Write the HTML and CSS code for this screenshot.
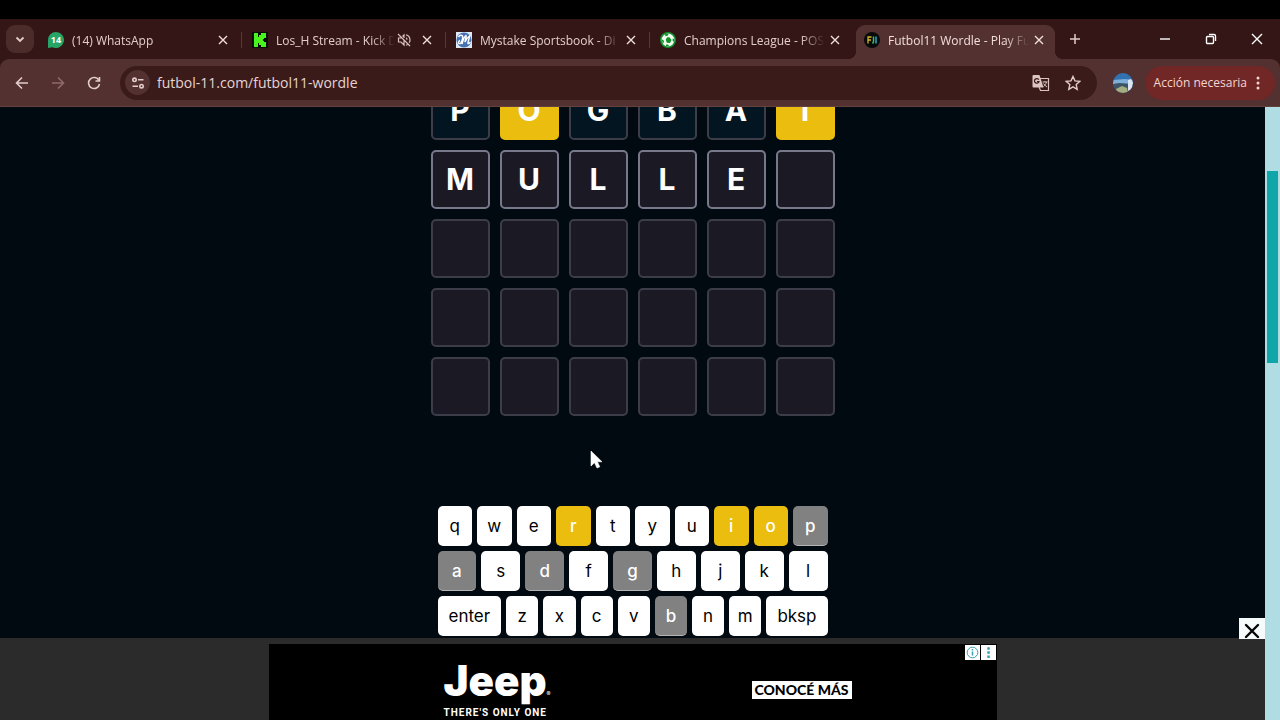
FILE: index.html
```html
<!DOCTYPE html>
<html lang="es">
<head>
    <meta charset="UTF-8">
    <meta name="viewport" content="width=device-width, initial-scale=1.0">
    <title>Futbol11 Wordle</title>
    <link rel="stylesheet" href="styles.css">
</head>
<body>

<div class="tab-strip">
    <button class="tab-search" aria-label="Buscar pestañas">
        <svg width="12" height="12" viewBox="0 0 12 12"><path d="M2.500 4.500 6 8l3.500-3.500" fill="none" stroke="currentColor" stroke-width="1.800"/></svg>
    </button>
    <div class="tabs">
        <div class="tab">
            <svg class="favicon" viewBox="0 0 16 16"><path d="M8 0a8 8 0 1 1-3.500 15.200L0 16V8a8 8 0 0 1 8-8z" fill="#27a567"/><text x="8" y="11" text-anchor="middle" class="badge-text">14</text></svg>
            <span class="tab-title">(14) WhatsApp</span>
            <button class="tab-close" aria-label="Cerrar"><svg width="10" height="10" viewBox="0 0 10 10"><path d="M1 1l8 8M9 1 1 9"/></svg></button>
        </div>
        <div class="tab">
            <svg class="favicon" viewBox="0 0 16 16"><path d="M0 0h16v16H0z" fill="#061006"/><path d="M2 1h4v4h1V3h2V1h5v5h-2v1h-1v2h1v1h2v5H9v-2H7v-2H6v4H2z" fill="#48f51c"/></svg>
            <span class="tab-title">Los_H Stream - Kick D</span>
            <svg class="muted" width="14" height="14" viewBox="0 0 14 14"><path d="M1 1l12 12M5 5H1.500v4H4l3 3V7M5.500 3.500 7 2v3M9 4.800c.8.500 1 1.200 1 2M9 1.800c2.500.6 4 3 4 5.200 0 1-.3 2-.8 2.800M9 12.200l1.500-.7"/></svg>
            <button class="tab-close" aria-label="Cerrar"><svg width="10" height="10" viewBox="0 0 10 10"><path d="M1 1l8 8M9 1 1 9"/></svg></button>
        </div>
        <div class="tab">
            <svg class="favicon" viewBox="0 0 16 16"><path d="M0 0h16v16H0z" fill="#dfe9f5"/><circle cx="8" cy="8" r="7.500" fill="#4472b4"/><path d="M2.500 5c2-3 5-2 4 2s-2 5-3.500 4.500S3 9 4 8.500M6 12c1-4 2-7 4-8.500 1 1-1 4-1 6.500 1.500-3 3-5 4.500-6 .5 2-2 5-1.500 7.500 1 .3 1.500-.5 2.500-1.500" fill="none" stroke="#fff" stroke-width="1.400"/></svg>
            <span class="tab-title">Mystake Sportsbook - Di</span>
            <button class="tab-close" aria-label="Cerrar"><svg width="10" height="10" viewBox="0 0 10 10"><path d="M1 1l8 8M9 1 1 9"/></svg></button>
        </div>
        <div class="tab before-active">
            <svg class="favicon" viewBox="0 0 16 16"><circle cx="8" cy="8" r="8" fill="#12912a"/><circle cx="8" cy="8" r="6.400" fill="#f2fbf2"/><path d="M9.500 5.200l2 2.800-1.500 3-3.200-.3L5.700 7.500l1.500-2.300zM5 2.200l3.500-.6-.5 1.900-2.500.8zM14.300 7l-.3 3-1.500-1.500.3-2zM1.700 7.500l1.800.5.5 2.500-1.300.8zM6 12.500l2.500.3.500 1.500-3-.3z" fill="#12912a"/></svg>
            <span class="tab-title">Champions League - POS</span>
            <button class="tab-close" aria-label="Cerrar"><svg width="10" height="10" viewBox="0 0 10 10"><path d="M1 1l8 8M9 1 1 9"/></svg></button>
        </div>
        <div class="tab active">
            <svg class="favicon" viewBox="0 0 16 16"><circle cx="8" cy="8" r="8" fill="#080a0a"/><path d="M4 11.500V5h3.500M4 8h3" fill="none" stroke="#d8b62a" stroke-width="1.300"/><path d="M9.500 4.500v5.500l-1 1.500" fill="none" stroke="#35b96a" stroke-width="1.500"/><path d="M12 4.500v7" stroke="#2aa6c4" stroke-width="1.500"/></svg>
            <span class="tab-title">Futbol11 Wordle - Play Fu</span>
            <button class="tab-close" aria-label="Cerrar"><svg width="10" height="10" viewBox="0 0 10 10"><path d="M1 1l8 8M9 1 1 9"/></svg></button>
        </div>
    </div>
    <button class="new-tab" aria-label="Nueva pestaña">
        <svg width="12" height="12" viewBox="0 0 12 12"><path d="M6 1v10M1 6h10" stroke="currentColor" stroke-width="1.500"/></svg>
    </button>
    <div class="window-controls">
        <button aria-label="Minimizar"><svg width="12" height="12" viewBox="0 0 12 12"><path d="M1 6h10"/></svg></button>
        <button aria-label="Restaurar"><svg width="12" height="12" viewBox="0 0 12 12"><rect x="1.500" y="3.500" width="7" height="7" rx="1"/><path d="M4 1.500h5a1.500 1.500 0 0 1 1.500 1.500v5"/></svg></button>
        <button aria-label="Cerrar ventana"><svg width="12" height="12" viewBox="0 0 12 12"><path d="M1 1l10 10M11 1 1 11"/></svg></button>
    </div>
</div>

<div class="toolbar">
    <button class="nav-btn" aria-label="Atrás"><svg width="14" height="14" viewBox="0 0 14 14"><path d="M13 7H2M7 1.500 1.500 7 7 12.500"/></svg></button>
    <button class="nav-btn" aria-label="Adelante" disabled><svg width="14" height="14" viewBox="0 0 14 14"><path d="M1 7h11M7 1.500 12.500 7 7 12.500"/></svg></button>
    <button class="nav-btn" aria-label="Recargar"><svg width="14" height="14" viewBox="0 0 14 14"><path d="M12 4.500A5.500 5.500 0 1 0 12.500 8M12.500 1v4H8.500"/></svg></button>
    <div class="omnibox">
        <button class="site-info" aria-label="Información del sitio">
            <svg width="14" height="14" viewBox="0 0 14 14"><circle cx="3.500" cy="3.800" r="1.700"/><path d="M7 3.800h5.500M1.500 10.200H7"/><circle cx="10.500" cy="10.200" r="1.700"/></svg>
        </button>
        <input class="url" type="text" aria-label="Dirección" value="futbol-11.com/futbol11-wordle">
        <button class="omni-btn" aria-label="Traducir">
            <svg width="18" height="18" viewBox="0 0 18 18"><path d="M8 4.500h8.500v12h-8L7 13" fill="none" stroke="#dcc4c3" stroke-width="1.200"/><path d="M1.500 1h6l4 12.500H1.500A1 1 0 0 1 .5 12.500V2a1 1 0 0 1 1-1z" fill="#dcc4c3"/><path d="M6.800 5.800A2.300 2.300 0 1 0 7 7.500H5" fill="none" stroke="#3a1b1a" stroke-width="1.200"/><path d="M10.500 8h5M13 7v1M14.500 8c-.5 2-1.500 3-3 4.500M11.500 9.500c1 1.500 2 2.500 3.500 3.500" fill="none" stroke="#dcc4c3"/></svg>
        </button>
        <button class="omni-btn" aria-label="Marcador">
            <svg width="16" height="16" viewBox="0 0 16 16"><path d="M8 1.500l2 4.400 4.700.5-3.500 3.200 1 4.700L8 11.900l-4.200 2.400 1-4.700L1.300 6.400 6 5.900z" fill="none" stroke="#e3cdcc" stroke-width="1.400"/></svg>
        </button>
    </div>
    <button class="avatar" aria-label="Perfil">
        <svg width="20" height="20" viewBox="0 0 20 20"><clipPath id="round"><circle cx="10" cy="10" r="10"/></clipPath><g clip-path="url(#round)"><path d="M0 0h20v20H0z" fill="#3272b0"/><path d="M0 7l12-1 8 1v4H0z" fill="#7fb0da"/><path d="M0 11l6-1 14 1v9H0z" fill="#3d5566"/><path d="M3 16l6-3 5 2 1 5H4z" fill="#a6ad80"/><path d="M15 7l3-1 2 4-1 6-4 2z" fill="#dce6f5"/></g></svg>
    </button>
    <button class="action-pill">Acción necesaria
        <svg width="4" height="14" viewBox="0 0 4 14"><circle cx="2" cy="2" r="1.500"/><circle cx="2" cy="7" r="1.500"/><circle cx="2" cy="12" r="1.500"/></svg>
    </button>
</div>

<div class="viewport">
    <main class="game">
        <div class="board" id="board"></div>
        <div class="keyboard" id="keyboard"></div>
    </main>
    <div class="scrollbar"><div class="thumb"></div></div>

    <div class="ad-bar">
        <button class="ad-close" aria-label="Cerrar anuncio"><svg width="16" height="16" viewBox="0 0 16 16"><path d="M2 2l12 12M14 2 2 14" stroke="#050505" stroke-width="2.400" stroke-linecap="round"/></svg></button>
        <div class="ad">
            <div class="brand">
                <div class="brand-name">Jeep<span class="reg">®</span></div>
                <div class="slogan">THERE'S ONLY ONE</div>
            </div>
            <a class="cta" href="#">CONOCÉ MÁS</a>
            <div class="ad-choices">
                <button aria-label="Información del anuncio"><svg width="13" height="13" viewBox="0 0 13 13"><circle cx="6.500" cy="6.500" r="5.300" fill="none" stroke="#36a3ab"/><path d="M6.500 5.500v4M6.500 3v1.500" stroke="#36a3ab" stroke-width="1.500"/></svg></button>
                <button aria-label="Opciones del anuncio"><svg width="13" height="13" viewBox="0 0 13 13" fill="#36a3ab"><path d="M5.300 1.200h2.500v2.500H5.300zM5.300 5.300h2.500v2.500H5.300zM5.300 9.400h2.500v2.500H5.300z"/></svg></button>
            </div>
        </div>
    </div>

    <svg class="cursor" width="14" height="20" viewBox="0 0 14 20"><path d="M1 1v15l3.500-3.300L7 18l2.800-1.200-2.400-5H12z" fill="#fff" stroke="#fff" stroke-width=".6"/></svg>
</div>

<script>
    const guesses = ['POGBAT', 'MULLE', '', '', ''];
    const currentRow = 1;
    const present = ['r', 'i', 'o'];
    const absent = ['p', 'a', 'd', 'g', 'b'];
    const layout = [
        ['q', 'w', 'e', 'r', 't', 'y', 'u', 'i', 'o', 'p'],
        ['a', 's', 'd', 'f', 'g', 'h', 'j', 'k', 'l'],
        ['enter', 'z', 'x', 'c', 'v', 'b', 'n', 'm', 'bksp']
    ];

    const board = document.getElementById('board');
    guesses.forEach((guess, row) => {
        for (let i = 0; i < 6; i++) {
            const cell = document.createElement('div');
            cell.className = 'cell';
            cell.innerText = guess[i] || '';
            if (row < currentRow) {
                // second and last letters are in the wrong position
                cell.classList.add(i === 1 || i === 5 ? 'present' : 'absent');
            } else if (row === currentRow) {
                cell.classList.add('current');
            }
            board.appendChild(cell);
        }
    });

    const keyboard = document.getElementById('keyboard');
    layout.forEach(keys => {
        const row = document.createElement('div');
        row.className = 'key-row';
        keys.forEach(key => {
            const button = document.createElement('button');
            button.className = 'key';
            button.innerText = key;
            if (key.length > 1) button.classList.add('wide');
            if (present.includes(key)) button.classList.add('present');
            if (absent.includes(key)) button.classList.add('absent');
            row.appendChild(button);
        });
        keyboard.appendChild(row);
    });
</script>

</body>
</html>
```

FILE: styles.css
```css
* {
    box-sizing: border-box;
}

body {
    margin: 0;
    padding-top: 19px;
    height: 100vh;
    display: flex;
    flex-direction: column;
    overflow: hidden;
    background-color: black;
    font-family: "Open Sans", "Noto Sans", sans-serif;
    color: #e3cdcc;
}

button {
    display: flex;
    justify-content: center;
    align-items: center;
    flex-shrink: 0;
    padding: 0;
    border: none;
    background: none;
    color: inherit;
    font-family: inherit;
    cursor: pointer;
}

/* Tabs */
.tab-strip {
    display: flex;
    align-items: center;
    height: 48px;
    margin-bottom: -8px;
    padding: 0 0 8px 6px;
    flex-shrink: 0;
    background-color: #331615;
}

.tab-search {
    width: 28px;
    height: 28px;
    margin-right: 6px;
    border-radius: 9px;
    background-color: #4c2c2b;
}

.tabs {
    display: flex;
    align-self: stretch;
    padding-top: 6px;
    flex: 0 1 1020px;
    min-width: 0;
}

.tab {
    position: relative;
    display: flex;
    align-items: center;
    flex: 1 1 0;
    min-width: 0;
    margin-right: 5px;
    padding: 0 8px 4px;
    font-size: 12px;
}

.tab::after {
    content: "";
    position: absolute;
    right: -3px;
    top: 7px;
    width: 1px;
    height: 16px;
    background-color: #583836;
}

.tab.before-active::after {
    display: none;
}

.tab.active {
    border-radius: 9px 9px 0 0;
    background-color: #523130;
    color: #f3dedd;
}

.tab.active::before,
.tab.active::after {
    content: "";
    position: absolute;
    top: auto;
    bottom: 0;
    width: 8px;
    height: 8px;
}

.tab.active::before {
    left: -8px;
    background: radial-gradient(circle at 0 0, transparent 8px, #523130 8px);
}

.tab.active::after {
    right: -8px;
    background: radial-gradient(circle at 100% 0, transparent 8px, #523130 8px);
}

.favicon {
    width: 16px;
    height: 16px;
    flex-shrink: 0;
    margin-right: 8px;
}

.badge-text {
    font-family: "Open Sans", sans-serif;
    font-size: 9px;
    font-weight: bold;
    fill: white;
}

.tab-title {
    flex: 1;
    min-width: 0;
    margin-right: 2px;
    overflow: hidden;
    white-space: nowrap;
    mask-image: linear-gradient(to right, black calc(100% - 24px), transparent);
}

.muted {
    flex-shrink: 0;
    margin-right: 8px;
    fill: none;
    stroke: #d9bfbe;
    stroke-width: 1.2;
}

.tab-close {
    width: 16px;
    height: 16px;
    color: #f0dddc;
}

.tab-close svg {
    fill: none;
    stroke: currentColor;
    stroke-width: 1.4;
}

.new-tab {
    width: 30px;
    height: 28px;
}

.window-controls {
    display: flex;
    margin-left: auto;
}

.window-controls button {
    width: 46px;
    height: 40px;
    color: white;
}

.window-controls svg {
    fill: none;
    stroke: currentColor;
    stroke-width: 1.4;
}

/* Toolbar */
.toolbar {
    display: flex;
    align-items: center;
    flex-shrink: 0;
    height: 48px;
    padding: 0 5px 0 4px;
    border-bottom: 1px solid #62413f;
    border-radius: 9px 9px 0 0;
    background-color: #523130;
}

.nav-btn {
    width: 36px;
    height: 34px;
}

.nav-btn:disabled {
    color: #8e6b69;
}

.nav-btn svg,
.site-info svg {
    fill: none;
    stroke: currentColor;
    stroke-width: 1.6;
}

.omnibox {
    display: flex;
    align-items: center;
    flex: 1;
    min-width: 0;
    height: 34px;
    margin-left: 8px;
    padding: 0 8px 0 5px;
    border-radius: 17px;
    background-color: #3a1b1a;
}

.site-info {
    width: 25px;
    height: 25px;
    margin-right: 7px;
    border-radius: 50%;
    background-color: #523130;
}

.url {
    flex: 1;
    min-width: 0;
    padding: 0;
    border: none;
    outline: none;
    background: none;
    color: #e8d3d2;
    font-family: inherit;
    font-size: 14px;
}

.omni-btn {
    width: 32px;
    height: 32px;
}

.avatar {
    width: 20px;
    height: 20px;
    margin: 0 12px 0 16px;
}

.action-pill {
    gap: 9px;
    height: 34px;
    padding: 0 15px 0 9px;
    border-radius: 17px;
    background-color: #702726;
    color: #f7d5d2;
    font-size: 12px;
}

.action-pill svg {
    fill: currentColor;
}

/* Page */
.viewport {
    position: relative;
    display: flex;
    flex: 1;
    min-height: 0;
    overflow: hidden;
    background-color: #010a10;
    font-family: Inter, sans-serif;
}

.game {
    display: flex;
    flex-direction: column;
    align-items: center;
    flex: 1;
    /* page is scrolled part of the way down the first row */
    margin-top: -26px;
}

.board {
    display: grid;
    grid-template-columns: repeat(6, 59px);
    gap: 10px;
}

.cell {
    display: flex;
    justify-content: center;
    align-items: center;
    height: 59px;
    padding-bottom: 2px;
    border: 2px solid #3c3d48;
    border-radius: 5px;
    background-color: #1b1a24;
    color: white;
    font-size: 30px;
    font-weight: 700;
}

.cell.current {
    border-color: #777889;
}

.cell.absent {
    background-color: #021520;
}

.cell.present {
    border-color: #eabd0e;
    background-color: #eabd0e;
}

.keyboard {
    display: flex;
    flex-direction: column;
    gap: 5px;
    width: 390px;
    margin-top: 90px;
}

.key-row {
    display: flex;
    gap: 5px;
}

.key {
    flex: 1 1 0;
    min-width: 0;
    height: 40px;
    border-radius: 5px;
    background-color: white;
    color: black;
    font-size: 17px;
}

.key.wide {
    flex: 0 0 auto;
    padding: 0 11px;
}

.key.present,
.key.absent {
    border-bottom: 1px solid #b5b5b5;
    color: white;
    font-weight: 500;
}

.key.present {
    border-color: #eabd0e;
    background-color: #eabd0e;
}

.key.absent {
    background-color: #818181;
}

.scrollbar {
    width: 15px;
    padding: 64px 2px 0;
    background-color: #b0dde4;
}

.thumb {
    height: 192px;
    background-color: #10a5a8;
}

/* Sticky ad over the bottom of the page */
.ad-bar {
    position: absolute;
    left: 0;
    right: 15px;
    bottom: 0;
    display: flex;
    justify-content: center;
    padding-top: 6px;
    background-color: #2b2b2b;
}

.ad {
    position: relative;
    display: flex;
    justify-content: space-between;
    width: 728px;
    height: 76px;
    padding: 0 145px 0 175px;
    overflow: hidden;
    background-color: black;
    color: white;
}

.brand {
    padding-top: 12px;
}

.brand-name {
    font-size: 42px;
    font-weight: 900;
    line-height: 50px;
}

.reg {
    font-size: 6px;
    font-weight: 400;
    line-height: 1;
}

.slogan {
    font-family: Roboto, sans-serif;
    font-size: 10px;
    font-weight: 700;
    letter-spacing: 1px;
    line-height: 14px;
    white-space: nowrap;
}

.cta {
    align-self: flex-start;
    margin-top: 37px;
    padding: 0 3px;
    background-color: white;
    color: black;
    font-family: Lato, sans-serif;
    font-size: 14px;
    font-weight: 900;
    line-height: 18px;
    text-decoration: none;
}

.ad-choices {
    position: absolute;
    top: 1px;
    right: 1px;
    display: flex;
    gap: 1px;
}

.ad-choices button {
    width: 15px;
    height: 15px;
    background-color: white;
}

.ad-close {
    position: absolute;
    top: -20px;
    right: 0;
    width: 26px;
    height: 21px;
    padding-top: 4px;
    background-color: #f5fafa;
}

.cursor {
    position: absolute;
    left: 590px;
    top: 343px;
}
```
